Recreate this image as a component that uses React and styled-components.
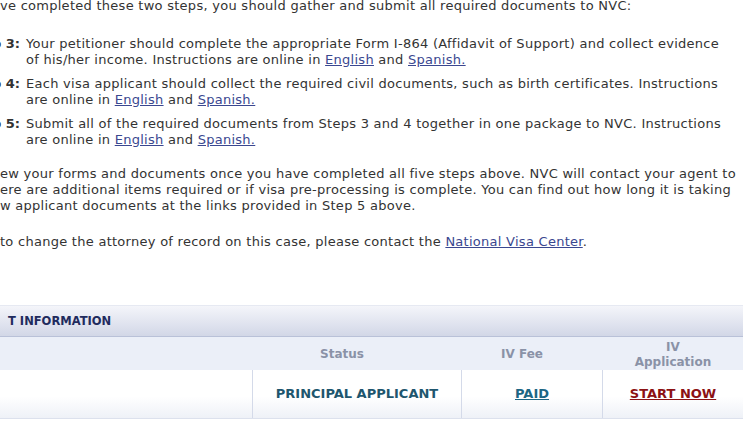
import React from 'react';
import styled, { createGlobalStyle } from 'styled-components';

const Global = createGlobalStyle`
  html, body { margin: 0; padding: 0; background: #ffffff; overflow: hidden; }
  body { font-family: "DejaVu Sans", Verdana, sans-serif; }
`;

const Page = styled.div`
  width: 743px;
  height: 432px;
  overflow: hidden;
  color: #333333;
  font-size: 13px;
  line-height: 16px;
  letter-spacing: 0.27px;
`;

const Para = styled.p`
  margin: ${(p) => p.$top || 0}px 0 0;
  white-space: nowrap;
`;

const Steps = styled.div`
  margin: 22px 0 0 -60px;
  display: flex;
  flex-direction: column;
  gap: 8px;
`;

const Step = styled.div`
  display: grid;
  grid-template-columns: 80px 1fr;
  column-gap: 6px;
`;

const StepLabel = styled.span`
  font-weight: bold;
  text-align: right;
  white-space: nowrap;
  letter-spacing: 0;
`;

const StepText = styled.span`
  white-space: nowrap;
`;

const Link = styled.a`
  color: #3a4790;
  text-decoration: underline;
`;

const Table = styled.section`
  margin-top: 55px;
  border-top: 1px solid #e6e9f2;
  letter-spacing: 0;
`;

const TitleBar = styled.div`
  height: 30px;
  display: flex;
  align-items: center;
  padding-left: 8px;
  background: linear-gradient(#f4f5fa, #d2d7e7);
  border-bottom: 1px solid #b9c1d8;
  color: #1f2b5e;
  font-size: 11.5px;
  font-weight: bold;
`;

const HeaderRow = styled.div`
  display: grid;
  grid-template-columns: 243px 198px 162px 140px;
  height: 33px;
  background: #ebeff8;
`;

const HeaderCell = styled.div`
  display: flex;
  align-items: center;
  justify-content: center;
  padding-top: 2px;
  text-align: center;
  color: #8a92a7;
  font-size: 12px;
  line-height: 15px;
  font-weight: bold;
`;

const DataRow = styled.div`
  display: grid;
  grid-template-columns: 252px 209px 141px 141px;
  height: 48px;
  background: linear-gradient(#ffffff 55%, #eef1f7);
  border-bottom: 1px solid #dce1ed;
`;

const DataCell = styled.div`
  display: flex;
  align-items: center;
  justify-content: center;
  font-size: 13px;
  font-weight: bold;
  color: #1e566e;
  border-left: ${(p) => (p.$first ? 'none' : '1px solid #d4dae9')};
`;

const CellLink = styled.a`
  color: ${(p) => (p.$red ? '#8c1214' : '#1c6684')};
  text-decoration: underline;
`;

const Langs = () => (
  <>
    <Link href="#">English</Link> and <Link href="#">Spanish.</Link>
  </>
);

export default function App() {
  return (
    <Page>
      <Global />
      <Para $top={-2}>
        ve completed these two steps, you should gather and submit all required documents to NVC:
      </Para>
      <Steps>
        <Step>
          <StepLabel>Step 3:</StepLabel>
          <StepText>
            Your petitioner should complete the appropriate Form I-864 (Affidavit of Support) and collect evidence
            <br />
            of his/her income. Instructions are online in <Langs />
          </StepText>
        </Step>
        <Step>
          <StepLabel>Step 4:</StepLabel>
          <StepText>
            Each visa applicant should collect the required civil documents, such as birth certificates. Instructions
            <br />
            are online in <Langs />
          </StepText>
        </Step>
        <Step>
          <StepLabel>Step 5:</StepLabel>
          <StepText>
            Submit all of the required documents from Steps 3 and 4 together in one package to NVC. Instructions
            <br />
            are online in <Langs />
          </StepText>
        </Step>
      </Steps>
      <Para $top={18}>
        ew your forms and documents once you have completed all five steps above. NVC will contact your agent to
        <br />
        ere are additional items required or if visa pre-processing is complete. You can find out how long it is taking
        <br />
        w applicant documents at the links provided in Step 5 above.
      </Para>
      <Para $top={20}>
        to change the attorney of record on this case, please contact the <Link href="#">National Visa Center</Link>.
      </Para>
      <Table>
        <TitleBar>T INFORMATION</TitleBar>
        <HeaderRow>
          <HeaderCell />
          <HeaderCell>Status</HeaderCell>
          <HeaderCell>IV Fee</HeaderCell>
          <HeaderCell>
            IV
            <br />
            Application
          </HeaderCell>
        </HeaderRow>
        <DataRow>
          <DataCell $first />
          <DataCell>PRINCIPAL APPLICANT</DataCell>
          <DataCell>
            <CellLink href="#">PAID</CellLink>
          </DataCell>
          <DataCell>
            <CellLink href="#" $red>
              START NOW
            </CellLink>
          </DataCell>
        </DataRow>
      </Table>
    </Page>
  );
}
